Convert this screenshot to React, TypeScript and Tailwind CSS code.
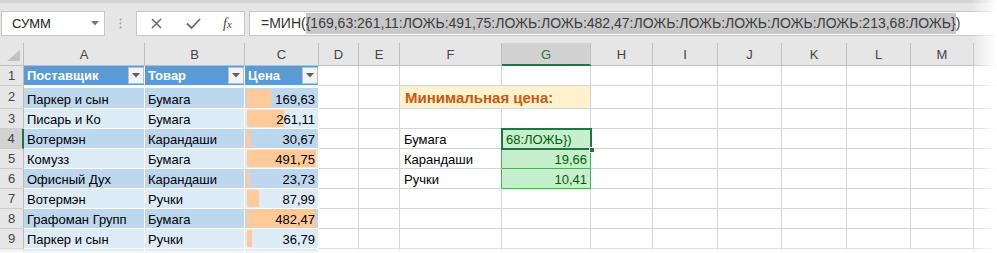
import React from "react";

type Item = [string, string, number];

const items: Item[] = [
  ["Паркер и сын", "Бумага", 169.63],
  ["Писарь и Ко", "Бумага", 261.11],
  ["Вотермэн", "Карандаши", 30.67],
  ["Комузз", "Бумага", 491.75],
  ["Офисный Дух", "Карандаши", 23.73],
  ["Вотермэн", "Ручки", 87.99],
  ["Графоман Групп", "Бумага", 482.47],
  ["Паркер и сын", "Ручки", 36.79],
  ["", "", 0],
];

const letters = ["A", "B", "C", "D", "E", "F", "G", "H", "I", "J", "K", "L", "M", ""];

const maxPrice = 491.75;
const fmt = (v: number) => v.toFixed(2).replace(".", ",");

const cell = "border-r border-b flex items-end px-[3px] leading-4 whitespace-nowrap";
const plain = `${cell} border-[#d4d4d4] bg-white`;

function FilterButton() {
  return (
    <span className="mb-px flex h-[17px] w-4 shrink-0 items-center justify-center border border-[#bfbfbf] bg-[#f3f3f3]">
      <svg width="8" height="5" viewBox="0 0 8 5">
        <polygon points="0,0 8,0 4,4.5" fill="#5f5f5f" />
      </svg>
    </span>
  );
}

function RowHeader({ n, active }: { n: number; active?: boolean }) {
  return (
    <div
      className={`flex items-center justify-center border-b border-[#cdcdcd] text-[13px] text-[#444] ${
        active
          ? "border-r-2 border-r-[#217346] bg-[#d2d2d2]"
          : "border-r border-r-[#bdbdbd] bg-[#e6e6e6]"
      }`}
    >
      {n < 10 ? n : ""}
    </div>
  );
}

function Filler({ from }: { from: number }) {
  // empty sheet cells to the right
  return (
    <>
      {letters.slice(from).map((l, i) => (
        <div key={l + i} className={plain} />
      ))}
    </>
  );
}

export default function App() {
  return (
    <div className="relative h-[253px] w-[997px] overflow-hidden bg-white font-['Liberation_Sans',Arial,sans-serif] text-[13px] text-black">
      {/* formula bar */}
      <div className="h-[43px] bg-[#e6e6e6]">
        <div className="h-[3px] bg-[#d4d4d4]" />
        <div className="mt-[8px] flex h-[25px] items-stretch">
          <div className="ml-px flex w-[104px] items-center justify-between border border-[#c6c6c6] bg-white pl-[10px] pr-[5px] text-[13px] text-[#222]">
            <span>СУММ</span>
            <svg width="8" height="5" viewBox="0 0 8 5">
              <polygon points="0,0 8,0 4,4.5" fill="#777" />
            </svg>
          </div>
          <div className="flex w-[31px] items-center justify-center">
            <svg width="3" height="11" viewBox="0 0 3 11">
              <circle cx="1.5" cy="1.5" r="1" fill="#a0a0a0" />
              <circle cx="1.5" cy="5.5" r="1" fill="#a0a0a0" />
              <circle cx="1.5" cy="9.5" r="1" fill="#a0a0a0" />
            </svg>
          </div>
          <div className="flex w-[109px] items-center border border-[#c6c6c6] bg-white">
            <span className="ml-[13px] flex w-[12px] justify-center">
              <svg width="11" height="11" viewBox="0 0 11 11">
                <path d="M1 1 L10 10 M10 1 L1 10" stroke="#6b6b6b" strokeWidth="1.5" />
              </svg>
            </span>
            <span className="ml-[24px] flex w-[15px] justify-center">
              <svg width="15" height="11" viewBox="0 0 15 11">
                <path d="M1 5.5 L5.5 10 L14 1" stroke="#6b6b6b" strokeWidth="1.8" fill="none" />
              </svg>
            </span>
            <span className="ml-[22px] font-['Liberation_Serif',serif] text-[14px] italic leading-none text-[#444]">
              f<span className="text-[11px]">x</span>
            </span>
          </div>
          <div className="ml-[4px] flex flex-1 items-center border border-[#c6c6c6] bg-white pl-[11px] text-[14px] text-[#333]">
            <span>=МИН(</span>
            <span className="bg-[#c8c8c8] text-[#3c3c3c]">
              {"{169,63:261,11:ЛОЖЬ:491,75:ЛОЖЬ:ЛОЖЬ:482,47:ЛОЖЬ:ЛОЖЬ:ЛОЖЬ:ЛОЖЬ:ЛОЖЬ:213,68:ЛОЖЬ}"}
            </span>
            <span className="text-[#2f4f8f]">)</span>
          </div>
        </div>
      </div>

      {/* sheet */}
      <div className="grid grid-cols-[24px_121px_100px_74px_40px_41px_102px_89px_62px_65px_64px_65px_64px_63px_1fr] grid-rows-[23px_20px_23px_20px_20px_20px_20px_20px_20px_20px_20px]">
        {/* column headers */}
        <div className="flex items-end justify-end border-r border-b border-[#bdbdbd] bg-[#e6e6e6] pb-[4px] pr-[3px]">
          <svg width="13" height="11" viewBox="0 0 13 11">
            <polygon points="13,0 13,11 0,11" fill="#c2c2c2" />
          </svg>
        </div>
        {letters.map((l, i) =>
          l === "G" ? (
            <div
              key={l}
              className="flex items-center justify-center border-r border-b-2 border-r-[#bdbdbd] border-b-[#217346] bg-[#d2d2d2] pt-[2px] text-[13px] text-[#217346]"
            >
              {l}
            </div>
          ) : (
            <div
              key={l + i}
              className="flex items-center justify-center border-r border-b border-[#bdbdbd] bg-[#e6e6e6] pt-[2px] text-[13px] text-[#444]"
            >
              {l}
            </div>
          )
        )}

        {/* row 1: table header */}
        <RowHeader n={1} />
        {["Поставщик", "Товар", "Цена"].map((t) => (
          <div
            key={t}
            className={`${cell} justify-between border-white bg-[#5b9bd5] pr-0 font-bold text-white`}
          >
            <span className="mb-px">{t}</span>
            <FilterButton />
          </div>
        ))}
        <Filler from={3} />

        {items.map(([a, b, c], i) => {
          const row = i + 2;
          const band = row % 2 === 0 ? "bg-[#bdd7ee]" : "bg-[#ddebf7]";
          const top = row === 2 ? "border-t-2" : "";
          return (
            <React.Fragment key={row}>
              <RowHeader n={row} active={row === 4} />
              <div className={`${cell} ${top} border-white ${band}`}>{a}</div>
              <div className={`${cell} ${top} border-white ${band}`}>{b}</div>
              <div className={`${cell} ${top} relative justify-end border-white ${band}`}>
                {c > 0 && (
                  <>
                    <span
                      className="absolute bottom-px left-[2px] top-px bg-[#ffca99]"
                      style={{ width: Math.max(2, (69 * c) / maxPrice) }}
                    />
                    <span className="relative">{fmt(c)}</span>
                  </>
                )}
              </div>
              <div className={plain} />
              <div className={plain} />
              {row === 2 && (
                <>
                  <div
                    className={`${cell} relative z-[1] border-r-[#fff2cc] border-b-[#d4d4d4] bg-[#fff2cc] pl-[5px] text-[15px] leading-5 font-bold text-[#c65911]`}
                  >
                    Минимальная цена:
                  </div>
                  <div className={`${cell} border-[#d4d4d4] bg-[#fff2cc]`} />
                </>
              )}
              {row === 3 && (
                <>
                  <div className={plain} />
                  <div className={plain} />
                </>
              )}
              {row === 4 && (
                <>
                  <div className={`${cell} border-[#d4d4d4] border-r-[#4caf50] bg-white pl-[4px]`}>Бумага</div>
                  <div className={`${cell} relative border-[#4caf50] bg-[#c6efce] pl-[4px] text-[#006100]`}>
                    68:ЛОЖЬ{"})"}
                    <span className="absolute -top-px -left-px -right-[2px] -bottom-[2px] z-10 border-2 border-[#217346]" />
                    <span className="absolute -right-[5px] -bottom-[5px] z-20 h-[6px] w-[6px] border border-white bg-[#217346]" />
                  </div>
                </>
              )}
              {(row === 5 || row === 6) && (
                <>
                  <div className={`${cell} border-[#d4d4d4] border-r-[#4caf50] bg-white pl-[4px]`}>
                    {row === 5 ? "Карандаши" : "Ручки"}
                  </div>
                  <div className={`${cell} justify-end border-[#4caf50] bg-[#c6efce] text-[#006100]`}>
                    {row === 5 ? "19,66" : "10,41"}
                  </div>
                </>
              )}
              {row >= 7 && (
                <>
                  <div className={plain} />
                  <div className={plain} />
                </>
              )}
              <Filler from={7} />
            </React.Fragment>
          );
        })}
      </div>

      {/* soft edge of the screenshot */}
      <div className="pointer-events-none absolute top-0 right-0 h-full w-[27px] bg-linear-to-r from-white/0 to-white" />
      <div className="pointer-events-none absolute bottom-0 left-0 h-[6px] w-full bg-linear-to-b from-white/0 to-white" />
    </div>
  );
}
